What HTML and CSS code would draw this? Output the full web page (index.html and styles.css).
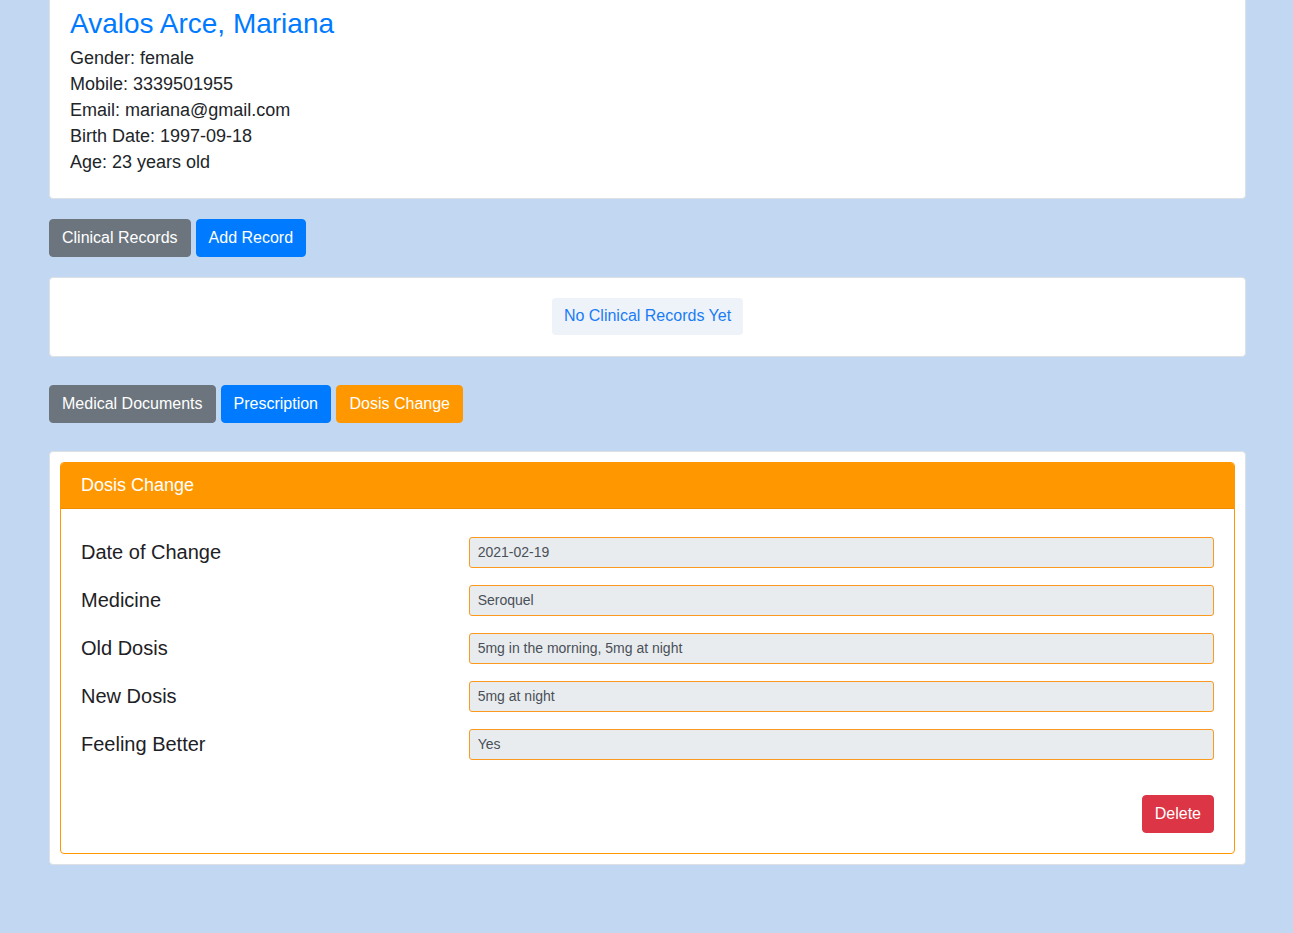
FILE: index.html
```html
<!DOCTYPE html>
<html lang="en">
<head>
<meta charset="utf-8">
<title>Patient</title>
<link rel="stylesheet" href="styles.css">
</head>
<body>
<div class="page">
  <div class="card patient">
    <h3 class="patient-name">Avalos Arce, Mariana</h3>
    <p>Gender: female</p>
    <p>Mobile: 3339501955</p>
    <p>Email: mariana@gmail.com</p>
    <p>Birth Date: 1997-09-18</p>
    <p>Age: 23 years old</p>
  </div>

  <div class="btn-row first">
    <button class="btn btn-gray">Clinical Records</button>
    <button class="btn btn-blue">Add Record</button>
  </div>

  <div class="card records">
    <div class="empty">No Clinical Records Yet</div>
  </div>

  <div class="btn-row second">
    <button class="btn btn-gray">Medical Documents</button>
    <button class="btn btn-blue">Prescription</button>
    <button class="btn btn-orange">Dosis Change</button>
  </div>

  <div class="card outer">
    <div class="dosis">
      <div class="dosis-header">Dosis Change</div>
      <div class="dosis-body">
        <div class="form-row"><label>Date of Change</label><input class="field" type="text" value="2021-02-19" readonly></div>
        <div class="form-row"><label>Medicine</label><input class="field" type="text" value="Seroquel" readonly></div>
        <div class="form-row"><label>Old Dosis</label><input class="field" type="text" value="5mg in the morning, 5mg at night" readonly></div>
        <div class="form-row"><label>New Dosis</label><input class="field" type="text" value="5mg at night" readonly></div>
        <div class="form-row"><label>Feeling Better</label><input class="field" type="text" value="Yes" readonly></div>
        <div class="actions"><button class="btn btn-red">Delete</button></div>
      </div>
    </div>
  </div>
</div>
</body>
</html>
```

FILE: styles.css
```css
* { box-sizing: border-box; }
html, body {
  margin: 0;
  padding: 0;
  background: #c1d7f2;
  font-family: "Liberation Sans", Arial, sans-serif;
  color: #212529;
}
.page {
  padding: 0 47px 68px 49px;
}
.card {
  background: #fff;
  border: 1px solid #dde1e6;
  border-radius: 4px;
}
.patient {
  margin-top: -14px;
  padding: 20px 20px 23px 20px;
}
.patient-name {
  margin: 0 0 4px 0;
  font-size: 28px;
  font-weight: 400;
  line-height: 34px;
  color: #007bff;
}
.patient p {
  margin: 0;
  font-size: 18px;
  line-height: 26px;
}
.btn-row {
  display: flex;
  gap: 5px;
}
.btn-row.first { margin-top: 20px; }
.btn-row.second { margin-top: 28px; }
.btn {
  font-family: "Liberation Sans", Arial, sans-serif;
  font-size: 16px;
  line-height: 24px;
  padding: 6px 12px;
  border: 1px solid transparent;
  border-radius: 4px;
  color: #fff;
  cursor: pointer;
}
.btn-gray { background: #6c757d; border-color: #6c757d; }
.btn-blue { background: #007bff; border-color: #007bff; }
.btn-orange { background: #ff9800; border-color: #ff9800; padding: 6px 12.5px; }
.btn-red { background: #dc3545; border-color: #dc3545; }
.records {
  margin-top: 20px;
  padding: 20px 20px 21px;
  display: flex;
  justify-content: center;
}
.empty {
  background: #eef3f9;
  color: #1a7cf5;
  font-size: 16px;
  line-height: 24px;
  padding: 6px 12px 7px;
  border-radius: 4px;
  height: 37px;
}
.outer {
  margin-top: 28px;
  padding: 10px;
}
.dosis {
  border: 1px solid #ff9800;
  border-radius: 4px;
  overflow: hidden;
}
.dosis-header {
  background: #ff9800;
  color: #fff;
  font-size: 18px;
  line-height: 21px;
  padding: 12px 20px;
  border-bottom: 1px solid #f08c00;
}
.dosis-body {
  padding: 19px 20px 20px;
}
.form-row {
  display: grid;
  grid-template-columns: calc((100% + 30px) / 3 - 30px) 1fr;
  column-gap: 30px;
  align-items: center;
  height: 48px;
}
.form-row label {
  font-size: 20px;
  line-height: 30px;
  color: #1d2125;
}
.field {
  display: block;
  width: 100%;
  height: 31px;
  padding: 4px 8px;
  font-family: "Liberation Sans", Arial, sans-serif;
  font-size: 14px;
  color: #495057;
  background: #e9ecef;
  border: 1px solid #fb9a1e;
  border-radius: 3px;
  outline: none;
}
.actions {
  display: flex;
  justify-content: flex-end;
  margin-top: 27px;
}
```
